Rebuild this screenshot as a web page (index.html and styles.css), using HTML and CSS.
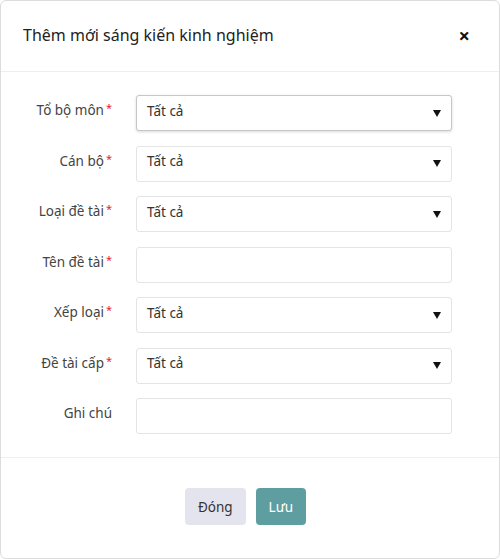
FILE: index.html
```html
<!DOCTYPE html>
<html lang="vi">
<head>
<meta charset="utf-8">
<title>Thêm mới sáng kiến kinh nghiệm</title>
<link rel="stylesheet" href="styles.css">
</head>
<body>
<div class="modal">
  <div class="modal-header">
    <h2 class="modal-title">Thêm mới sáng kiến kinh nghiệm</h2>
    <span class="close">&times;</span>
  </div>
  <div class="modal-body">
    <div class="row">
      <label class="lbl">Tổ bộ môn<span class="req">*</span></label>
      <div class="select focused"><span>Tất cả</span><i class="caret"></i></div>
    </div>
    <div class="row">
      <label class="lbl">Cán bộ<span class="req">*</span></label>
      <div class="select"><span>Tất cả</span><i class="caret"></i></div>
    </div>
    <div class="row">
      <label class="lbl">Loại đề tài<span class="req">*</span></label>
      <div class="select"><span>Tất cả</span><i class="caret"></i></div>
    </div>
    <div class="row">
      <label class="lbl">Tên đề tài<span class="req">*</span></label>
      <div class="input"></div>
    </div>
    <div class="row">
      <label class="lbl">Xếp loại<span class="req">*</span></label>
      <div class="select"><span>Tất cả</span><i class="caret"></i></div>
    </div>
    <div class="row">
      <label class="lbl">Đề tài cấp<span class="req">*</span></label>
      <div class="select"><span>Tất cả</span><i class="caret"></i></div>
    </div>
    <div class="row">
      <label class="lbl">Ghi chú</label>
      <div class="input"></div>
    </div>
  </div>
  <div class="modal-footer">
    <button class="btn btn-close">Đóng</button>
    <button class="btn btn-save">Lưu</button>
  </div>
</div>
</body>
</html>
```
FILE: styles.css
```css
html, body {
  margin: 0;
  padding: 0;
  background: #fff;
}
body {
  font-family: "Noto Sans", "Open Sans", sans-serif;
  color: #333;
}
.modal {
  box-sizing: border-box;
  width: 500px;
  height: 559px;
  border: 1px solid #dcdcdc;
  border-radius: 6px;
  background: #fff;
}
.modal-header {
  display: flex;
  align-items: center;
  justify-content: space-between;
  height: 70px;
  padding: 0 29px 0 22px;
  border-bottom: 1px solid #eceef0;
}
.modal-title {
  margin: 0 0 2px;
  font-size: 16px;
  font-weight: 400;
  color: #222;
}
.close {
  font-size: 20px;
  font-weight: 700;
  color: #111;
  line-height: 1;
}
.modal-body {
  padding: 23px 0 23px;
  display: flex;
  flex-direction: column;
  gap: 14.5px;
  border-bottom: 1px solid #eceef0;
}
.row {
  display: grid;
  grid-template-columns: 111px 316px;
  column-gap: 24px;
  align-items: center;
  height: 36px;
}
.lbl {
  text-align: right;
  font-size: 13.5px;
  color: #444;
  margin-top: -7px;
}
.req {
  color: #e0243a;
  font-size: 11px;
  margin-left: 2px;
  vertical-align: 3px;
}
.select, .input {
  box-sizing: border-box;
  height: 36px;
  border: 1px solid #e2e4e6;
  border-radius: 3px;
  display: flex;
  align-items: center;
  justify-content: space-between;
  padding: 0 10px;
  font-size: 13.5px;
  color: #333;
  background: #fff;
}
.select span {
  margin-top: -5px;
}
.select.focused {
  border-color: #c4c6c8;
  box-shadow: 0 1px 3px rgba(0,0,0,0.15);
}
.caret {
  width: 0;
  height: 0;
  border-left: 4px solid transparent;
  border-right: 4px solid transparent;
  border-top: 7px solid #111;
}
.modal-footer {
  display: flex;
  justify-content: center;
  gap: 10px;
  padding-top: 30px;
  padding-right: 9px;
}
.btn {
  font-family: inherit;
  height: 37px;
  border: none;
  border-radius: 4px;
  font-size: 13.5px;
  padding: 0 13px;
  cursor: pointer;
}
.btn-close {
  background: #e3e4ee;
  color: #333;
}
.btn-save {
  background: #5f9ea0;
  color: #fff;
}
```
